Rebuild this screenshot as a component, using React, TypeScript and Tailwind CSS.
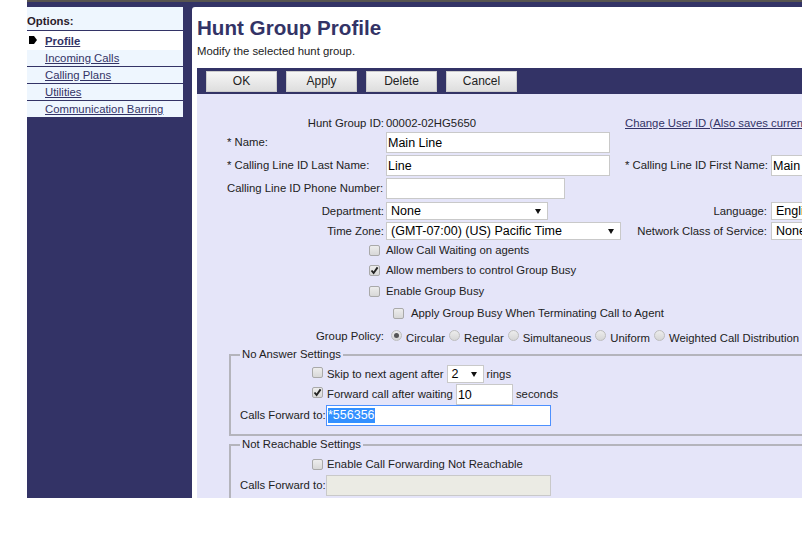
import React from "react";

const ff = { fontFamily: '"Liberation Sans", Arial, sans-serif' };

function Check({ on = false }: { on?: boolean }) {
  return (
    <span className="relative inline-block w-[11px] h-[11px] shrink-0 rounded-[2px] border border-[#a9a9a9] bg-gradient-to-b from-[#ededed] to-[#d8d8d8]">
      {on && (
        <svg viewBox="0 0 11 11" className="absolute -left-px -top-px w-[11px] h-[11px]">
          <path d="M2.5 5.5 L4.6 8 L8.6 2.4" fill="none" stroke="#222" strokeWidth="1.9" />
        </svg>
      )}
    </span>
  );
}

function Radio({ on = false }: { on?: boolean }) {
  return (
    <span className="flex items-center justify-center w-[11px] h-[11px] shrink-0 rounded-full border border-[#bdbdbd] bg-gradient-to-b from-[#ececec] to-[#d6d6d6]">
      {on && <span className="block w-[5px] h-[5px] rounded-full bg-[#555]" />}
    </span>
  );
}

function TextBox({ w, value }: { w: string; value?: string }) {
  return (
    <input
      readOnly
      value={value ?? ""}
      className={`${w} h-[21px] shrink-0 bg-white border border-[#c9c9c9] px-[1px] text-[12.5px] text-black outline-none`}
      style={ff}
    />
  );
}

function Select({ w, value, arrow = true }: { w: string; value: string; arrow?: boolean }) {
  return (
    <div className={`${w} h-[18px] shrink-0 bg-white border border-[#c9c9c9] pl-[4px] pr-[6px] flex items-center justify-between text-[12.5px] text-black overflow-hidden whitespace-nowrap`}>
      <span>{value}</span>
      {arrow && (
        <svg viewBox="0 0 6 5" className="w-[6px] h-[5px] shrink-0">
          <path d="M0 0H6L3 5Z" fill="#111" />
        </svg>
      )}
    </div>
  );
}

function Option({ on, label, ml }: { on?: boolean; label: string; ml: string }) {
  return (
    <span className={`flex items-center shrink-0 ${ml}`}>
      <span className="-mt-[4px]"><Radio on={on} /></span>
      <span className="ml-[4px] mt-[1px]">{label}</span>
    </span>
  );
}

export default function App() {
  const nav = ["Incoming Calls", "Calling Plans", "Utilities", "Communication Barring"];
  return (
    <div className="w-[802px] h-[544px] bg-white overflow-hidden text-[11.33px] text-[#222]" style={ff}>
      <div className="h-[2px] ml-[27px] bg-[#57544f]" />
      <div className="ml-[27px] h-[496px] bg-[#333366] flex pt-[5px] overflow-hidden">
        <aside className="w-[156px] h-[110px] shrink-0 bg-[#eef6fe]">
          <div className="h-[24px] border-b border-[#333366] font-bold text-[#2a1a2a] flex items-center pt-[5px]">Options:</div>
          <div className="h-[19px] bg-white flex items-center relative pl-[18px] pt-[2px]">
            <span className="absolute left-[2px] top-[5px] w-[5px] h-[8px] bg-black" />
            <span className="absolute left-[7px] top-[5px] w-0 h-0 border-y-[4px] border-y-transparent border-l-[3px] border-l-black" />
            <a className="font-bold underline text-[#333366]">Profile</a>
          </div>
          {nav.map((n, i) => (
            <div key={n} className={`h-[17px] pl-[18px] flex items-center ${i < 3 ? "border-b border-[#333366]" : ""}`}>
              <a className="underline text-[#333366]">{n}</a>
            </div>
          ))}
        </aside>
        <main className="ml-[9px] flex-1 min-w-0 bg-white pl-[5px] rounded-tl-[3px]">
          <h1 className="text-[20.6px] leading-[25px] font-bold text-[#333366] pt-[8px] whitespace-nowrap">Hunt Group Profile</h1>
          <p className="mt-[4px] leading-[14px] text-[#222]">Modify the selected hunt group.</p>
          <div className="mt-[10px] h-[26px] bg-[#333366] flex items-center gap-[9px] pl-[9px]">
            {["OK", "Apply", "Delete", "Cancel"].map((b) => (
              <button key={b} className="w-[71px] h-[21px] border border-[#ccc] bg-gradient-to-b from-[#f6f6f6] to-[#dedede] text-[12px] text-[#222] flex items-center justify-center">
                {b}
              </button>
            ))}
          </div>
          <form className="bg-[#e5e5f9] h-[405px] pt-[22px] overflow-hidden">
            <div className="h-[14px] flex items-center whitespace-nowrap [&>*]:shrink-0">
              <span className="w-[187px] text-right">Hunt Group ID:</span>
              <span className="ml-[2px] w-[239px]">00002-02HG5650</span>
              <a className="underline text-[#333366]">Change User ID (Also saves current changes)</a>
            </div>
            <div className="mt-[2px] h-[21px] flex items-center pl-[30px] [&>*]:shrink-0">
              <span className="w-[159px]">* Name:</span>
              <TextBox w="w-[224px]" value="Main Line" />
            </div>
            <div className="mt-[2px] h-[21px] flex items-center pl-[30px] whitespace-nowrap [&>*]:shrink-0">
              <span className="w-[159px]">* Calling Line ID Last Name:</span>
              <TextBox w="w-[224px]" value="Line" />
              <span className="ml-[15px] w-[146px]">* Calling Line ID First Name:</span>
              <TextBox w="w-[60px]" value="Main" />
            </div>
            <div className="mt-[2px] h-[21px] flex items-center pl-[30px] whitespace-nowrap [&>*]:shrink-0">
              <span className="w-[159px]">Calling Line ID Phone Number:</span>
              <TextBox w="w-[179px]" />
            </div>
            <div className="mt-[3px] h-[18px] flex items-center whitespace-nowrap [&>*]:shrink-0">
              <span className="w-[187px] text-right">Department:</span>
              <span className="ml-[2px] w-[239px]"><Select w="w-[162px]" value="None" /></span>
              <span className="w-[142px] text-right">Language:</span>
              <span className="ml-[4px]"><Select w="w-[60px]" value="English" arrow={false} /></span>
            </div>
            <div className="mt-[2px] h-[18px] flex items-center whitespace-nowrap [&>*]:shrink-0">
              <span className="w-[187px] text-right">Time Zone:</span>
              <span className="ml-[2px]"><Select w="w-[235px]" value="(GMT-07:00) (US) Pacific Time" /></span>
              <span className="ml-[4px] w-[142px] text-right">Network Class of Service:</span>
              <span className="ml-[4px]"><Select w="w-[60px]" value="None" arrow={false} /></span>
            </div>
            <div className="mt-[2px] h-[16px] flex items-center pl-[172px] gap-[6px]"><Check /><span>Allow Call Waiting on agents</span></div>
            <div className="mt-[4px] h-[16px] flex items-center pl-[172px] gap-[6px]"><Check on /><span>Allow members to control Group Busy</span></div>
            <div className="mt-[5px] h-[16px] flex items-center pl-[172px] gap-[6px]"><Check /><span>Enable Group Busy</span></div>
            <div className="mt-[6px] h-[16px] flex items-center pl-[196px] gap-[7px] whitespace-nowrap"><Check /><span>Apply Group Busy When Terminating Call to Agent</span></div>
            <div className="mt-[8px] h-[17px] flex items-center whitespace-nowrap [&>*]:shrink-0">
              <span className="w-[187px] text-right -mt-[2px]">Group Policy:</span>
              <Option on label="Circular" ml="ml-[7px]" />
              <Option label="Regular" ml="ml-[4px]" />
              <Option label="Simultaneous" ml="ml-[4px]" />
              <Option label="Uniform" ml="ml-[4px]" />
              <Option label="Weighted Call Distribution" ml="ml-[4px]" />
            </div>
            <fieldset className="ml-[32px] -mr-[20px] mt-[2px] h-[88px] border-2 border-[#b4b4bc] pl-[9px] min-w-0">
              <legend className="px-[2px] leading-[13px]">No Answer Settings</legend>
              <div className="mt-[4px] h-[18px] flex items-center pl-[72px] gap-[3px] whitespace-nowrap">
                <span className="mr-[1px]"><Check /></span><span>Skip to next agent after</span>
                <Select w="w-[37px]" value="2" />
                <span>rings</span>
              </div>
              <div className="mt-[1px] h-[21px] flex items-center pl-[72px] gap-[3px] whitespace-nowrap">
                <span className="mr-[1px]"><Check on /></span><span>Forward call after waiting</span>
                <TextBox w="w-[57px]" value="10" />
                <span>seconds</span>
              </div>
              <div className="h-[21px] flex items-center whitespace-nowrap">
                <span className="w-[86px] shrink-0">Calls Forward to:</span>
                <div className="w-[225px] h-[21px] bg-white border border-[#4d90fe] px-[1px] flex items-center text-[12.5px] text-white">
                  <span className="bg-[#3390ff] leading-[15px]">*556356</span>
                </div>
              </div>
            </fieldset>
            <fieldset className="ml-[32px] -mr-[20px] mt-[2px] h-[90px] border-2 border-[#b4b4bc] pl-[9px] min-w-0">
              <legend className="px-[2px] leading-[13px]">Not Reachable Settings</legend>
              <div className="mt-[4px] h-[18px] flex items-center pl-[72px] gap-[4px] whitespace-nowrap">
                <Check /><span>Enable Call Forwarding Not Reachable</span>
              </div>
              <div className="mt-[2px] h-[21px] flex items-center whitespace-nowrap">
                <span className="w-[86px] shrink-0">Calls Forward to:</span>
                <div className="w-[225px] h-[21px] bg-[#ebebe4] border border-[#c9c9c9]" />
              </div>
            </fieldset>
          </form>
        </main>
      </div>
    </div>
  );
}
